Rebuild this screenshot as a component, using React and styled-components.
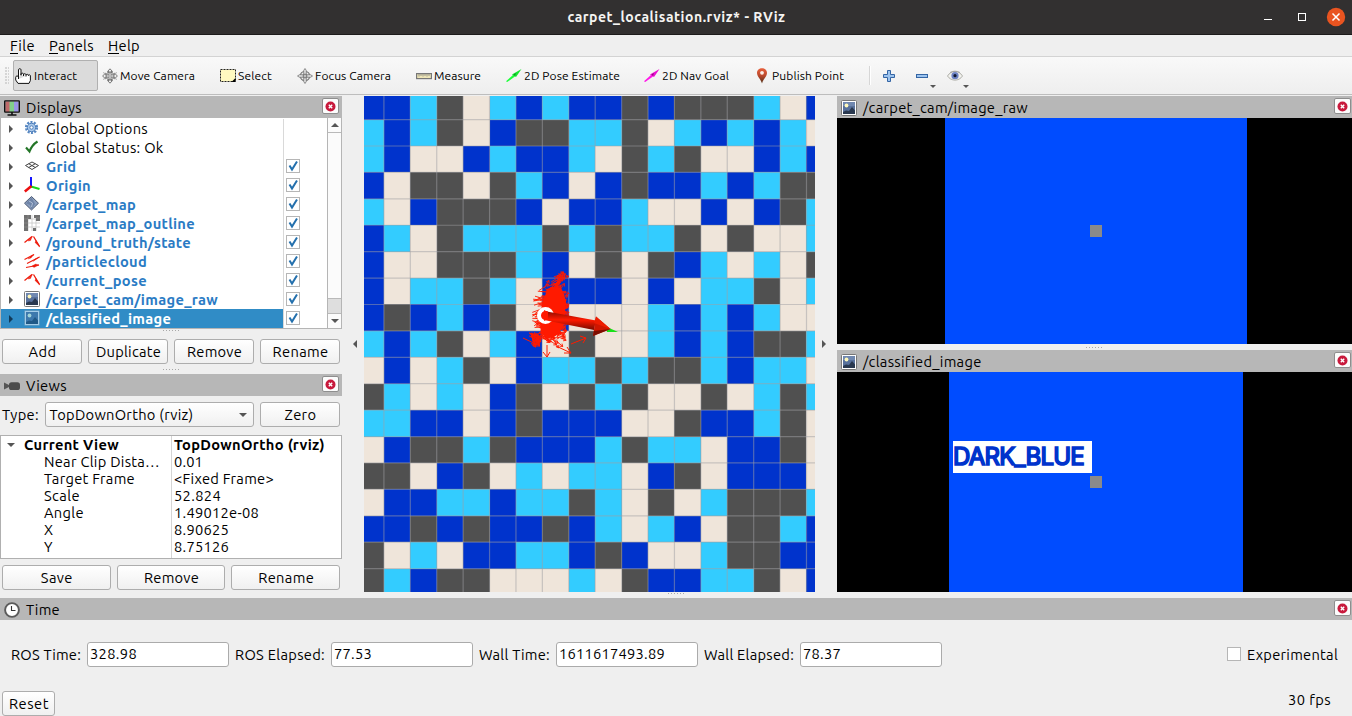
import React, { useLayoutEffect, useRef, useState } from "react";
import styled, { createGlobalStyle, css } from "styled-components";

const Global = createGlobalStyle`
  * { box-sizing: border-box; }
  body { margin: 0; background: #efefef; overflow: hidden; }
`;

const sans = `"Ubuntu", "Open Sans", "Noto Sans", sans-serif`;

/* ---------- text that keeps a given advance width ---------- */

const Label = styled.span`
  display: inline-block;
  flex: none;
  white-space: pre;
  margin: 0 -1px 0 0;
  font-weight: ${(p) => (p.$bold ? 700 : "inherit")};
`;

function Text({ w, bold, children }) {
  const ref = useRef(null);
  const [spacing, setSpacing] = useState(0);
  useLayoutEffect(() => {
    const natural = ref.current.getBoundingClientRect().width;
    const count = ref.current.textContent.length;
    setSpacing((w + 1 - natural) / count);
  }, [w]);
  return (
    <Label ref={ref} $bold={bold} style={{ letterSpacing: `${spacing}px` }}>
      {children}
    </Label>
  );
}

/* ---------- window frame ---------- */

const Window = styled.div`
  width: 1352px;
  height: 716px;
  display: flex;
  flex-direction: column;
  background: #efefef;
  color: #000;
  font: 14.67px/18px ${sans};
`;

const TitleBar = styled.header`
  height: 35px;
  flex: none;
  display: grid;
  grid-template-columns: 1fr auto 1fr;
  align-items: center;
  background: #323030;
  border-bottom: 1px solid #1d1b1b;
  color: #f5f4f2;
  font-weight: 700;
  font-size: 14px;
  padding-bottom: 1px;
`;

const WindowControls = styled.div`
  display: flex;
  justify-content: flex-end;
  height: 32px;
`;

const MenuBar = styled.nav`
  height: 22px;
  flex: none;
  display: flex;
  align-items: center;
  gap: 15px;
  padding-left: 10px;
  border-bottom: 1px solid #d3d3d3;
`;

const Mnemonic = styled.span`
  display: inline-block;
  height: 17px;
  line-height: 18px;
  border-bottom: 1.5px solid #000;
`;

const ToolBar = styled.div`
  height: 38px;
  flex: none;
  display: flex;
  align-items: center;
  font-size: 12px;
  background: linear-gradient(#f9f9f9, #eeeeee);
  border-bottom: 1px solid #bdbdbd;
`;

const Grip = styled.div`
  width: 4px;
  height: 17px;
  margin: 0 4px 0 5px;
  background-image: radial-gradient(circle at 1px 1px, #c4c4c4 0.6px, transparent 0.9px);
  background-size: 3px 3px;
`;

const ToolButton = styled.button`
  width: ${(p) => p.$w - 1}px;
  height: 31px;
  margin-right: 1px;
  flex: none;
  display: flex;
  align-items: center;
  gap: 2px;
  padding: 0 0 0 2px;
  font: inherit;
  color: #000;
  border: 1px solid ${(p) => (p.$active ? "#b0b0b0" : "transparent")};
  border-radius: 2px;
  background: ${(p) => (p.$active ? "#dbdbdb" : "transparent")};
  svg { margin-left: ${(p) => (p.$active ? -1 : 0)}px; margin-right: ${(p) => (p.$active ? 1 : 0)}px; }
`;

const ToolSeparator = styled.div`
  width: 2px;
  height: 19px;
  background: #d6d6d6;
  border-right: 1px solid #fff;
`;

const ToolMini = styled.div`
  display: flex;
  margin-left: ${(p) => p.$gap}px;
  svg { overflow: visible; }
`;

/* ---------- docks ---------- */

const Main = styled.main`
  height: 497px;
  flex: none;
  display: flex;
  padding-top: 1px;
`;

const Column = styled.section`
  width: ${(p) => p.$w}px;
  flex: none;
  display: flex;
  flex-direction: column;
`;

const Splitter = styled.div`
  width: 22px;
  flex: none;
  display: flex;
  align-items: center;
  justify-content: ${(p) => (p.$right ? "flex-start" : "flex-end")};
  padding: 0 5px;
`;

const DockHeader = styled.div`
  height: 22px;
  flex: none;
  display: flex;
  align-items: center;
  background: #b7b7b7;
  padding: 1px ${(p) => p.$edge}px 0 4px;
  gap: 6px;
`;

const Spacer = styled.div`
  flex: 1;
`;

const CloseBox = styled.button`
  width: 17px;
  height: 16px;
  margin-bottom: 3px;
  padding: 0;
  display: flex;
  align-items: center;
  justify-content: center;
  border: 1px solid #8e8e8e;
  border-radius: 2px;
  background: #fcfcfc;
`;

const Handle = styled.div`
  height: ${(p) => p.$h}px;
  flex: none;
  display: flex;
  justify-content: center;
  align-items: ${(p) => p.$align || "center"};
  padding-top: ${(p) => (p.$align ? 1 : 0)}px;
`;

const Dots = styled.div`
  width: 17px;
  height: 1px;
  background-image: linear-gradient(90deg, #a8a8a8 1px, transparent 1px);
  background-size: 3px 1px;
  background-repeat: repeat-x;
`;

const pushFace = css`
  border: 1px solid #adadad;
  border-radius: 3px;
  background: linear-gradient(#ffffff, #f0f0f0);
`;

const ButtonRow = styled.div`
  display: flex;
  gap: 6px;
  padding: 0 2px;
  flex: none;
`;

const PushButton = styled.button`
  ${pushFace}
  height: 25px;
  flex: ${(p) => (p.$w ? `0 0 ${p.$w}px` : "1 1 0")};
  display: flex;
  align-items: center;
  justify-content: center;
  padding: 1px 0 0;
  font: inherit;
  color: #000;
`;

const Combo = styled.div`
  ${pushFace}
  width: 209px;
  height: 25px;
  display: flex;
  align-items: center;
  justify-content: space-between;
  padding: 0 6px 0 4px;
`;

const TypeRow = styled.div`
  display: flex;
  align-items: center;
  height: 25px;
  margin-top: 6px;
  padding: 0 2px;
  justify-content: space-between;
`;

/* ---------- display tree ---------- */

const Tree = styled.div`
  height: 211px;
  display: flex;
  border: 1px solid #b5b5b5;
  border-top: 0;
  background: #fff;
`;

const TreeRows = styled.div`
  flex: 1;
  display: flex;
  flex-direction: column;
  padding-top: 1px;
`;

const TreeRow = styled.div`
  height: 19px;
  flex: none;
  display: flex;
  align-items: center;
`;

const TreeName = styled.div`
  width: 283px;
  height: 19px;
  display: flex;
  align-items: center;
  padding-left: 6px;
  border-right: 1px solid #d9d9d9;
  background: ${(p) => (p.$selected ? "#308cc6" : "transparent")};
  color: ${(p) => (p.$selected ? "#fff" : p.$link ? "#2a7bc4" : "#000")};
  svg:nth-of-type(2) { margin: 0 6px 1px 9px; }
`;

const Check = styled.span`
  width: 14px;
  height: 14px;
  margin: 0 0 1px 2px;
  flex: none;
  display: flex;
  border: 1px solid #b6b6b6;
  background: #fff;
`;

const ScrollBar = styled.div`
  width: 14px;
  display: flex;
  flex-direction: column;
  border-left: 1px solid #b5b5b5;
  background: #fff;
`;

const ScrollStep = styled.div`
  height: 14px;
  display: flex;
  align-items: center;
  justify-content: center;
  background: #fbfbfb;
`;

const ScrollThumb = styled.div`
  height: 167px;
  background: #fbfbfb;
  border: solid #b9b9b9;
  border-width: 1px 0;
`;

const ScrollTrack = styled.div`
  flex: 1;
  background: #dedede;
  border-bottom: 1px solid #b9b9b9;
`;

/* ---------- view properties ---------- */

const Props = styled.div`
  height: 124px;
  margin-top: 8px;
  flex: none;
  display: flex;
  border: 1px solid #b0b0b0;
  background: #fff;
`;

const PropColumn = styled.div`
  width: ${(p) => p.$w}px;
  display: flex;
  flex-direction: column;
  border-right: ${(p) => (p.$rule ? "1px solid #d5d5d5" : 0)};
  padding: 0 0 0 2px;
`;

const PropCell = styled.div`
  height: 17px;
  flex: none;
  display: flex;
  align-items: center;
  padding-left: ${(p) => p.$indent || 0}px;
`;

/* ---------- camera images ---------- */

const CameraView = styled.div`
  height: ${(p) => p.$h}px;
  flex: none;
  display: flex;
  background: #000;
  padding: 0 ${(p) => p.$right}px 0 ${(p) => p.$left}px;
`;

const Frame = styled.div`
  position: relative;
  flex: 1;
  background: #004cff;
`;

const CenterPatch = styled.i`
  position: absolute;
  left: ${(p) => p.$x}px;
  top: ${(p) => p.$y}px;
  width: 12px;
  height: 12px;
  background: #8a8a8a;
`;

const ClassTag = styled.div`
  position: absolute;
  left: 4px;
  top: 69px;
  width: 139px;
  height: 32px;
  padding-left: 0;
  background: #fff;
  color: #0033cc;
  font: 400 24px/31px "Inter", "Liberation Sans", sans-serif;
  -webkit-text-stroke: 1.7px #0033cc;
`;

/* ---------- time panel ---------- */

const TimePanel = styled.footer`
  flex: 1;
  display: flex;
  flex-direction: column;
`;

const TimeRow = styled.div`
  display: flex;
  align-items: center;
  height: 26px;
  margin-top: 21px;
  padding: 0 15px 0 11px;
  line-height: 19px;
`;

const Field = styled.div`
  width: 142px;
  height: 25px;
  margin: 0 6px 0 7px;
  display: flex;
  align-items: center;
  padding: 0 0 1px 2px;
  border: 1px solid #ababab;
  border-radius: 3px;
  background: #fff;
`;

const EmptyCheck = styled.span`
  width: 14px;
  height: 14px;
  margin-right: 6px;
  border: 1px solid #b6b6b6;
  background: #fff;
`;

const StatusRow = styled.div`
  display: flex;
  align-items: flex-start;
  justify-content: space-between;
  margin-top: 24px;
  padding: 0 22px 0 2px;
`;

/* ---------- icons ---------- */

const Svg = ({ w = 16, h = 16, children, ...rest }) => (
  <svg width={w} height={h} viewBox={`0 0 ${w} ${h}`} fill="none" {...rest}>
    {children}
  </svg>
);

const Arrow = ({ dir, color = "#555" }) => {
  const d = {
    right: "M2 0L6 4L2 8Z",
    left: "M6 0L2 4L6 8Z",
    down: "M0 2H8L4 6Z",
    up: "M0 6H8L4 2Z",
  }[dir];
  return (
    <Svg w={8} h={8}>
      <path d={d} fill={color} />
    </Svg>
  );
};

const icons = {
  hand: (
    <Svg>
      <path
        d="M3.5 9V1.8C3.5 .3 6 .3 6 1.8V7.5M6 7V5.8C6.3 4.8 8.4 5 8.5 6V8M8.5 6.5C9 5.3 11 5.6 11 6.8V8.5M11 7C11.6 5.9 13.4 6.2 13.5 7.5V8M13.5 7C14.5 6.4 15.4 7 15.4 8V12.5L14 15.4H3L.7 12V9.2C1 7.5 3 7.5 3.5 9V11"
        fill="#fff" stroke="#111" strokeWidth="1"
      />
    </Svg>
  ),
  move: (
    <Svg stroke="#777" strokeWidth="1">
      <path d="M8 .8L10.5 3.5H9V6.8H12.5V5.2L15.4 8L12.5 10.8V9.2H9V12.5H10.5L8 15.2L5.5 12.5H7V9.2H3.5V10.8L.6 8L3.5 5.2V6.8H7V3.5H5.5Z" fill="#eee" />
      <circle cx="8" cy="8" r="4" />
      <path d="M1 4.5L15 11.5M1 11.5L15 4.5" stroke="#999" strokeWidth=".7" />
    </Svg>
  ),
  select: (
    <Svg>
      <rect x=".5" y="1.5" width="15" height="12" fill="#fff9c0" stroke="#222" strokeDasharray="2 1" />
      <path d="M15.5 10V14H11.5Z" fill="#000" />
    </Svg>
  ),
  focus: (
    <Svg stroke="#777">
      <circle cx="8" cy="8" r="4.7" strokeWidth="1.3" fill="#eee" />
      <path d="M8 .5L9.3 2.5V13.5L8 15.5L6.7 13.5V2.5ZM.5 8L2.5 6.7H13.5L15.5 8L13.5 9.3H2.5Z" fill="#ddd" strokeWidth=".8" />
      <circle cx="8" cy="8" r="2" strokeWidth=".8" />
    </Svg>
  ),
  ruler: (
    <Svg>
      <rect x=".6" y="5.6" width="14.8" height="5" fill="#eee6b8" stroke="#777" strokeWidth="1.2" />
      <path d="M3 6V8.5M5 6V8M7 6V8.5M9 6V8M11 6V8.5M13 6V8" stroke="#777" strokeWidth=".7" />
    </Svg>
  ),
  pose: (
    <Svg>
      <path d="M0 13.2L7.5 6.5L9 8.5L1.2 14Z" fill="#1cff3a" />
      <path d="M6 6.500L15.500 1L10 9Z" fill="#16e432" />
      <path d="M7.500 6.500L10 5L9 8Z" fill="#0a9a20" />
    </Svg>
  ),
  goal: (
    <Svg>
      <path d="M0 13.2L7.5 6.5L9 8.5L1.2 14Z" fill="#ff18e8" />
      <path d="M6 6.500L15.500 1L10 9Z" fill="#ea0fd0" />
      <path d="M7.500 6.500L10 5L9 8Z" fill="#8f0a80" />
    </Svg>
  ),
  pin: (
    <Svg>
      <defs>
        <linearGradient id="pin" x1="0" y1="0" x2="0" y2="1">
          <stop offset="0" stopColor="#e8603c" />
          <stop offset=".5" stopColor="#b8482c" />
          <stop offset="1" stopColor="#4a2c14" />
        </linearGradient>
      </defs>
      <path d="M8 15.6C7.4 12 3 8.5 3 5C3 2 5.2 .2 8 .2S13 2 13 5C13 8.5 8.600 12 8 15.600Z" fill="url(#pin)" />
      <circle cx="8" cy="4.8" r="1.9" fill="#fbeee8" />
    </Svg>
  ),
  plus: (
    <Svg w={12} h={12}>
      <path d="M4.500 .5H7.500V4.500H11.500V7.500H7.500V11.500H4.500V7.500H.5V4.500H4.500Z" fill="#9cc3ee" stroke="#3465a4" />
    </Svg>
  ),
  minus: (
    <Svg w={21} h={16}>
      <rect x=".5" y="6.500" width="11" height="3" fill="#9cc3ee" stroke="#3465a4" />
      <path d="M14 17H20L17 20Z" fill="#555" />
    </Svg>
  ),
  eye: (
    <Svg w={22} h={16}>
      <path d="M.5 8C4 2 12 2 15.500 8C12 13.500 4 13.500 .5 8Z" fill="#f2f2ee" stroke="#b0b0aa" />
      <circle cx="8" cy="7.700" r="3.600" fill="#6d83c4" />
      <circle cx="8" cy="7.700" r="1.600" fill="#101830" />
      <path d="M3 4.500C6 2.700 10 2.700 13 4.500" stroke="#999" strokeWidth=".8" />
      <path d="M16 17H22L19 20Z" fill="#555" />
    </Svg>
  ),
  monitor: (
    <Svg>
      <path d="M1.500 1.500H6V12H1.500Z" fill="#c06a6a" />
      <path d="M5.500 1.500H10.500V12H5.500Z" fill="#82cf8a" />
      <path d="M10 1.500H14.500V12H10Z" fill="#9a95e6" />
      <rect x=".7" y=".9" width="14.600" height="11.200" rx=".5" stroke="#111" strokeWidth="1.400" />
      <path d="M8 12V14.500M3.500 15H12.500" stroke="#111" strokeWidth="1.600" />
    </Svg>
  ),
  camera: (
    <Svg>
      <path d="M0 4.500L5 7V9L0 11.500Z" fill="#555" />
      <rect x="5" y="4.300" width="11" height="7.800" rx="2.600" fill="#4b4b4b" />
    </Svg>
  ),
  clock: (
    <Svg>
      <circle cx="8" cy="8" r="6.900" fill="#fff" stroke="#5b5b5b" strokeWidth="1.900" />
      <path d="M7.500 4V8.500H11.500" stroke="#333" strokeWidth="1.100" />
    </Svg>
  ),
  image: (
    <Svg>
      <rect x=".5" y=".5" width="15" height="15" rx="1" fill="#fff" stroke="#777" />
      <rect x="2" y="2" width="12" height="12" fill="#58719c" />
      <path d="M2 2H14V6H2Z" fill="#7088b0" />
      <path d="M2 12L5 10.500L8 11L11 7L14 10.500V14H2Z" fill="#29384f" />
      <circle cx="5.500" cy="5.500" r="1.900" fill="#fff8bb" />
    </Svg>
  ),
  imageSelected: (
    <Svg>
      <rect x=".5" y=".5" width="15" height="15" rx="1" fill="#a3cde9" stroke="#5797c0" />
      <rect x="2" y="2" width="12" height="12" fill="#3d79ad" />
      <path d="M2 12L5 10.500L8 11L11 7L14 10.500V14H2Z" fill="#205987" />
      <circle cx="5.500" cy="5.500" r="1.900" fill="#a1d4d8" />
    </Svg>
  ),
  gear: (
    <Svg>
      <circle cx="7.500" cy="7.500" r="5.300" stroke="#5687c2" strokeWidth="2.600" strokeDasharray="2 1.330" />
      <circle cx="7.500" cy="7.500" r="4.200" fill="#a9c8ea" stroke="#4f7fbb" />
      <circle cx="7.500" cy="7.500" r="1.700" fill="#fff" stroke="#4f7fbb" />
    </Svg>
  ),
  ok: (
    <Svg>
      <path d="M2 8.500L5.500 12.500C7 8.500 9.500 5 13.500 2.500" stroke="#237527" strokeWidth="2.100" />
    </Svg>
  ),
  grid: (
    <Svg>
      <path d="M1.500 7.500L8 4L14.500 7.500L8 11.500ZM4.700 5.700L11.300 9.500M11.300 5.700L4.700 9.500" stroke="#444" />
    </Svg>
  ),
  axes: (
    <Svg strokeWidth="2">
      <path d="M7 9.500L15.500 12" stroke="#18d818" />
      <path d="M7 9V0" stroke="#1414ff" />
      <path d="M7.500 9L.8 14.500" stroke="#ec1010" strokeWidth="2.600" />
    </Svg>
  ),
  map: (
    <Svg>
      <path d="M7.500 .5L14.500 7.200L7.500 14L.5 7.200Z" fill="#8b9ebd" stroke="#4c5a74" />
      <path d="M7.500 1.500L11 8L7.500 13.500L6 9L2 7.200Z" fill="#6e84a8" />
      <path d="M5 5L8.500 7L7.500 11" stroke="#c0cde0" strokeWidth=".8" />
    </Svg>
  ),
  outline: (
    <Svg>
      <rect width="16" height="16" fill="#fff" />
      <path d="M4 4H16M0 8H16M0 12H16M4 0V16M8 0V16M12 0V16" stroke="#c5c5c5" strokeWidth=".8" />
      <path d="M0 0H7V4H4V16H0ZM10 0H16V6H12V3H10ZM9 13H12V16H9Z" fill="#707070" />
      <path d="M0 4H4M0 8H4M0 12H4M4 0V4M12 3H16" stroke="#969696" strokeWidth=".6" />
    </Svg>
  ),
  path: (
    <Svg stroke="#ee1c0c" strokeWidth="1.300">
      <path d="M.5 8.500L8 2.500M9.500 2.500L15.500 12.500" />
      <path d="M4 7L8.500 2L6.500 6.500ZM12 6.500L15.800 13L11 8.500Z" fill="#ee1c0c" strokeWidth=".4" />
    </Svg>
  ),
  cloud: (
    <Svg stroke="#ee1c0c" strokeWidth="1.100">
      <path d="M.5 6.500L10 1.500M3 10.500L15.500 4M2 14.500L15 12" />
      <path d="M4 6L7 3L10 1.500L7 5ZM9 8.500L11 6L15.500 4ZM8 13L11.500 11L15 12L10 14.500Z" fill="#ee1c0c" strokeWidth=".3" />
    </Svg>
  ),
};

const CloseButton = () => (
  <CloseBox>
    <Svg w={11} h={11}>
      <circle cx="5.500" cy="5.500" r="5" fill="#c8193c" />
      <path d="M3.800 3.800L7.200 7.200M7.200 3.800L3.800 7.200" stroke="#fff" strokeWidth="1.400" />
    </Svg>
  </CloseBox>
);

const Header = ({ icon, w, edge = 1, children }) => (
  <DockHeader $edge={edge}>
    {icons[icon]}
    <Text w={w}>{children}</Text>
    <Spacer />
    <CloseButton />
  </DockHeader>
);

/* ---------- carpet map ---------- */

const tileColors = { B: "#0033cc", C: "#33ccff", D: "#505050", W: "#efe5da" };

const carpet = [
  "BBCDWCBCBBDBDDDCWB",
  "CBCDWBDDCCDWCBCBCW",
  "CBWWBCBBCWDCDWWBCB",
  "BWDDWDCBWBDBBCBCDD",
  "CWBDDDBWBBCWWBWBDC",
  "BCWDCCCDCDCCDWDWWC",
  "BWWDDDCBWDWDBCWCWD",
  "BWCCDCWBBBWBWCCDWC",
  "BDBCBDWBWWWCBCBCWW",
  "CBCDWCBWDWWCBCBDDC",
  "WBWCDWBCCDCDDCBCCW",
  "DCWCWBDWDCDWWDWCDC",
  "CCBBWBDBBBWWDBBCDW",
  "WBDDCDBBBCDCCWBBDW",
  "DDWBDWCWCCWBDWBBBW",
  "WBBCCBCCDCWDWCDDDC",
  "BBDBDBBDBCWCBWDDCB",
  "DWCWBBCCBDBWWCDDBB",
  "DCBDDWWWCWDBBCCDWB",
];

const TILE = 26.412;
const edgeX = (i) => (i === 0 ? 0 : 19.900 + (i - 1) * TILE);
const edgeY = (i) => (i === 0 ? 0 : 23.600 + (i - 1) * TILE);

const arrowPath = (x, y, a, len, h) => {
  const tx = Math.min(x + Math.cos(a) * len, 205);
  const ty = y + Math.sin(a) * len;
  const f = (n) => n.toFixed(1);
  const wing = (o) => `${f(tx - Math.cos(a + o) * h)} ${f(ty - Math.sin(a + o) * h)}`;
  return `M${f(x)} ${f(y)}L${f(tx)} ${f(ty)}M${wing(-0.6)}L${f(tx)} ${f(ty)}L${wing(0.6)}`;
};

function particles() {
  let seed = 11;
  const rnd = () => {
    seed = (seed * 16807) % 2147483647;
    return seed / 2147483647;
  };
  let d = "";
  // upper tail, leaning right
  for (let i = 0; i < 26; i++) {
    const t = rnd();
    d += arrowPath(190 - t * 9 + rnd() * 7, 180 + t * 16, -0.7 + rnd() * 0.5, 7 + rnd() * 5, 3);
  }
  // dense body
  for (let i = 0; i < 130; i++) {
    const t = rnd();
    d += arrowPath(180 + rnd() * 17, 192 + t * 52, (rnd() - 0.5) * 2.2, 6 + rnd() * 5, 3);
  }
  // left fringe
  for (let i = 0; i < 58; i++) {
    const t = rnd();
    const y = 193 + t * 48;
    d += arrowPath(166 + rnd() * 12 + Math.abs(t - 0.5) * 8, y, (rnd() - 0.5) * 1.3, 8 + rnd() * 7, 3);
  }
  // lower left
  for (let i = 0; i < 24; i++) {
    d += arrowPath(163 + rnd() * 22, 236 + rnd() * 5, 0.3 + rnd() * 1.2, 7 + rnd() * 6, 3.5);
  }
  return d;
}

const CarpetMap = () => (
  <svg width="451" height="496" viewBox="0 0 451 496">
    <defs>
      <linearGradient id="shaft" x1="0" y1="0" x2="-0.030" y2="1">
        <stop offset="0" stopColor="#8a0c00" />
        <stop offset=".45" stopColor="#ff1a00" />
        <stop offset="1" stopColor="#6e0a00" />
      </linearGradient>
    </defs>
    <g shapeRendering="crispEdges">
      {carpet.map((row, r) =>
        [...row].map((c, i) => (
          <rect key={`${r}-${i}`} x={edgeX(i)} y={edgeY(r)} width={27} height={27} fill={tileColors[c]} />
        ))
      )}
    </g>
    <g stroke="#a0a0a4" strokeOpacity=".5" strokeWidth="1.200">
      {carpet.map((_, i) => i > 0 && <path key={i} d={`M0 ${edgeY(i)}H451`} />)}
      {[...carpet[0]].map((_, i) => i > 0 && <path key={i} d={`M${edgeX(i)} 0V496`} />)}
    </g>
    <path d={particles()} stroke="#ff1a00" strokeWidth=".9" fill="none" />
    <path
      d="M183 193L188 191L197 192L200 198L202 206L200 228L195 236L190 241L184 242L177 238L176 226L178 208L181 200Z"
      fill="#ff1a00"
    />
    <g stroke="#ff1a00" fill="none">
      <path d="M159 242L176 250M171 244L176 250L169 250M192 250L207 257M203 251L207 257L200 257M207 248L222 242M216 240L222 242L219 247M183 249L183 261M179 256L183 261L186 256" />
    </g>
    <circle cx="181.500" cy="219.500" r="6.500" fill="none" stroke="#fff" strokeWidth="4" />
    <path d="M243 231L254 236L243 236Z" fill="#18e018" />
    <path d="M180 215L232 224.500L230 234L180 224Z" fill="url(#shaft)" />
    <path d="M180 214L184 216V223L180 225Z" fill="#ff1a00" />
    <path d="M232 220.500L246.500 233L229 240Z" fill="#cf1600" />
    <path d="M232 220.500L246.500 233L230 227Z" fill="#ee1c00" />
    <path d="M246.500 233L229 240L230 235Z" fill="#7c0d00" />
  </svg>
);

/* ---------- data ---------- */

const tools = [
  ["hand", "Interact", 42, 86],
  ["move", "Move Camera", 74, 118],
  ["select", "Select", 33, 77],
  ["focus", "Focus Camera", 75, 119],
  ["ruler", "Measure", 46, 90],
  ["pose", "2D Pose Estimate", 95, 138],
  ["goal", "2D Nav Goal", 66, 110],
  ["pin", "Publish Point", 71, 118],
];

const displays = [
  ["gear", "Global Options", 101, false],
  ["ok", "Global Status: Ok", 116.500, false],
  ["grid", "Grid", 29.500, true],
  ["axes", "Origin", 44, true],
  ["map", "/carpet_map", 89, true],
  ["outline", "/carpet_map_outline", 148, true],
  ["path", "/ground_truth/state", 144, true],
  ["cloud", "/particlecloud", 100, true],
  ["path", "/current_pose", 100, true],
  ["image", "/carpet_cam/image_raw", 171, true],
  ["imageSelected", "/classified_image", 124, true],
];

const viewProps = [
  ["Near Clip Dista…", 115, "0.01", 28],
  ["Target Frame", 90, "<Fixed Frame>", 99],
  ["Scale", 35, "52.824", 46],
  ["Angle", 39, "1.49012e-08", 84],
  ["X", 9, "8.90625", 54],
  ["Y", 9, "8.75126", 54],
];

const times = [
  ["ROS Time:", 69, "328.98", 46],
  ["ROS Elapsed:", 89, "77.53", 37],
  ["Wall Time:", 70, "1611617493.89", 105],
  ["Wall Elapsed:", 89, "78.37", 37],
];

export default function App() {
  return (
    <Window>
      <Global />
      <TitleBar>
        <span />
        <Text w={217}>carpet_localisation.rviz* - RViz</Text>
        <WindowControls>
          <Svg w={92} h={32}>
            <path d="M4 18.500H12" stroke="#fff" />
            <rect x="38.500" y="12.500" width="7" height="7" stroke="#fff" />
            <circle cx="76" cy="16" r="9.200" fill="#e95420" />
            <path d="M72.500 12.500L79.500 19.500M79.500 12.500L72.500 19.500" stroke="#fff" strokeWidth="1.500" />
          </Svg>
        </WindowControls>
      </TitleBar>
      <MenuBar>
        <Text w={24}><Mnemonic>F</Mnemonic>ile</Text>
        <Text w={44}><Mnemonic>P</Mnemonic>anels</Text>
        <Text w={31}><Mnemonic>H</Mnemonic>elp</Text>
      </MenuBar>
      <ToolBar>
        <Grip />
        {tools.map(([icon, name, w, width], i) => (
          <ToolButton key={name} $w={width} $active={i === 0}>
            {icons[icon]}
            <Text w={w}>{name}</Text>
          </ToolButton>
        ))}
        <ToolSeparator />
        <ToolMini $gap={12}>{icons.plus}</ToolMini>
        <ToolMini $gap={21}>{icons.minus}</ToolMini>
        <ToolMini $gap={10}>{icons.eye}</ToolMini>
      </ToolBar>

      <Main>
        <Column $w={342}>
          <Header icon="monitor" w={55} edge={3}>Displays</Header>
          <Tree>
            <TreeRows>
              {displays.map(([icon, name, w, link], i) => (
                <TreeRow key={name}>
                  <TreeName $link={link} $selected={i === 10}>
                    <Arrow dir="right" color={i === 10 ? "#123a58" : "#555"} />
                    {icons[icon]}
                    <Text w={w} bold={link}>{name}</Text>
                  </TreeName>
                  {link && (
                    <Check>
                      <Svg w={12} h={12}>
                        <path d="M2.500 5.500L5 9.500L10 1.500" stroke="#2470ad" strokeWidth="2" />
                      </Svg>
                    </Check>
                  )}
                </TreeRow>
              ))}
            </TreeRows>
            <ScrollBar>
              <ScrollStep><Arrow dir="up" /></ScrollStep>
              <ScrollThumb />
              <ScrollTrack />
              <ScrollStep><Arrow dir="down" /></ScrollStep>
            </ScrollBar>
          </Tree>
          <Handle $h={10} $align="flex-start"><Dots /></Handle>
          <ButtonRow>
            <PushButton><Text w={27}>Add</Text></PushButton>
            <PushButton><Text w={64}>Duplicate</Text></PushButton>
            <PushButton><Text w={54}>Remove</Text></PushButton>
            <PushButton><Text w={55}>Rename</Text></PushButton>
          </ButtonRow>
          <Handle $h={10}><Dots /></Handle>
          <Header icon="camera" w={40} edge={3}>Views</Header>
          <TypeRow>
            <Text w={36}>Type:</Text>
            <Combo>
              <Text w={143}>TopDownOrtho (rviz)</Text>
              <Arrow dir="down" />
            </Combo>
            <PushButton $w={80}><Text w={31}>Zero</Text></PushButton>
          </TypeRow>
          <Props>
            <PropColumn $w={171} $rule>
              <PropCell $indent={4}>
                <Arrow dir="down" />
                <PropCell $indent={9}><Text w={94} bold>Current View</Text></PropCell>
              </PropCell>
              {viewProps.map(([name, w]) => (
                <PropCell key={name} $indent={41}><Text w={w}>{name}</Text></PropCell>
              ))}
            </PropColumn>
            <PropColumn $w={168}>
              <PropCell><Text w={150} bold>TopDownOrtho (rviz)</Text></PropCell>
              {viewProps.map(([name, , value, w]) => (
                <PropCell key={name}><Text w={w}>{value}</Text></PropCell>
              ))}
            </PropColumn>
          </Props>
          <Handle $h={6} />
          <ButtonRow>
            <PushButton><Text w={31}>Save</Text></PushButton>
            <PushButton><Text w={54}>Remove</Text></PushButton>
            <PushButton><Text w={55}>Rename</Text></PushButton>
          </ButtonRow>
        </Column>

        <Splitter><Arrow dir="left" /></Splitter>
        <CarpetMap />
        <Splitter $right><Arrow dir="right" /></Splitter>

        <Column $w={515}>
          <Header icon="image" w={164}>/carpet_cam/image_raw</Header>
          <CameraView $h={226} $left={108} $right={105}>
            <Frame><CenterPatch $x={145} $y={107} /></Frame>
          </CameraView>
          <Handle $h={6}><Dots /></Handle>
          <Header icon="image" w={117}>/classified_image</Header>
          <CameraView $h={220} $left={112} $right={109}>
            <Frame>
              <ClassTag><Text w={130}>DARK_BLUE</Text></ClassTag>
              <CenterPatch $x={141} $y={104} />
            </Frame>
          </CameraView>
        </Column>
      </Main>

      <TimePanel>
        <Handle $h={6} $align="flex-start"><Dots /></Handle>
        <Header icon="clock" w={33}>Time</Header>
        <TimeRow>
          {times.map(([name, w, value, vw]) => (
            <React.Fragment key={name}>
              <Text w={w}>{name}</Text>
              <Field><Text w={vw}>{value}</Text></Field>
            </React.Fragment>
          ))}
          <Spacer />
          <EmptyCheck />
          <Text w={90}>Experimental</Text>
        </TimeRow>
        <StatusRow>
          <PushButton $w={53}><Text w={39}>Reset</Text></PushButton>
          <Text w={42}>30 fps</Text>
        </StatusRow>
      </TimePanel>
    </Window>
  );
}
